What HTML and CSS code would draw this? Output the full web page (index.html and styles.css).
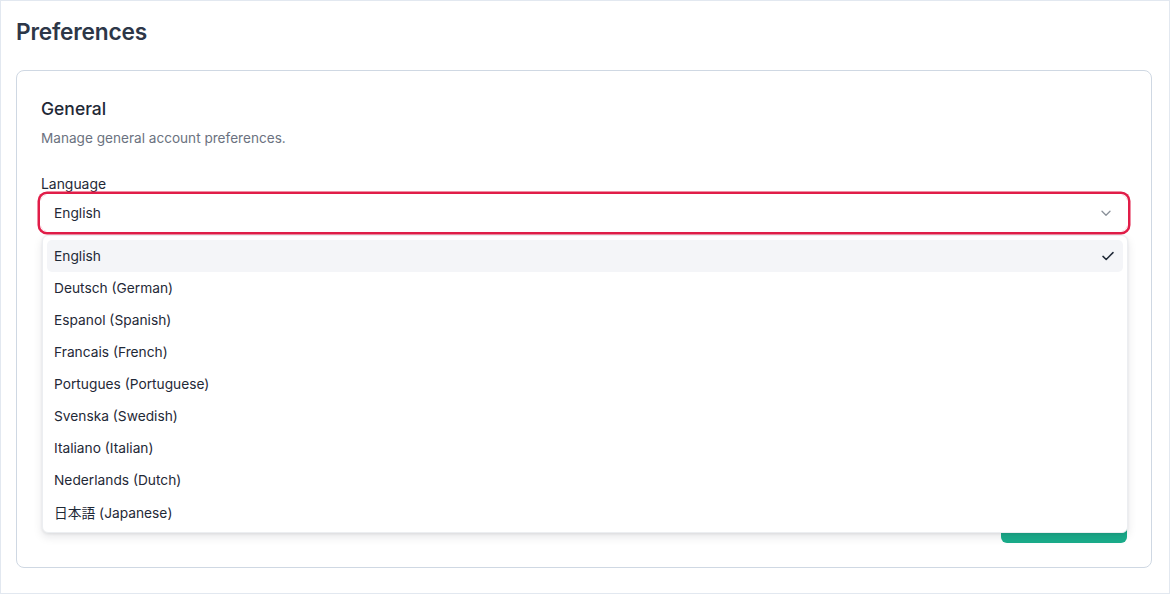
FILE: index.html
```html
<!DOCTYPE html>
<html lang="en">
<head>
<meta charset="utf-8">
<title>Preferences</title>
<link rel="stylesheet" href="styles.css">
</head>
<body>
<div class="page">
  <h1 class="page-title">Preferences</h1>
  <section class="card">
    <h2 class="card-title">General</h2>
    <p class="card-desc">Manage general account preferences.</p>
    <div class="field">
      <label class="field-label">Language</label>
      <div class="select-wrap">
        <div class="select">
          <span class="select-value">English</span>
          <svg class="chevron" width="12" height="12" viewBox="0 0 12 12" fill="none"><path d="M2 4.2l4 4 4-4" stroke="#8a9099" stroke-width="1.3" stroke-linecap="round" stroke-linejoin="round"/></svg>
        </div>
        <ul class="menu">
          <li class="option active"><span>English</span>
            <svg class="check" width="14" height="14" viewBox="0 0 14 14" fill="none"><path d="M2 7.4l3.2 3.1L12 3.6" stroke="#1f2937" stroke-width="1.5" stroke-linecap="round" stroke-linejoin="round"/></svg>
          </li>
          <li class="option">Deutsch (German)</li>
          <li class="option">Espanol (Spanish)</li>
          <li class="option">Francais (French)</li>
          <li class="option">Portugues (Portuguese)</li>
          <li class="option">Svenska (Swedish)</li>
          <li class="option">Italiano (Italian)</li>
          <li class="option">Nederlands (Dutch)</li>
          <li class="option">日本語 (Japanese)</li>
        </ul>
      </div>
    </div>
    <div class="card-footer">
      <button class="btn-save">Save changes</button>
    </div>
  </section>
</div>
</body>
</html>
```

FILE: styles.css
```css
* { box-sizing: border-box; }
html, body { margin: 0; padding: 0; background: #fff; }
body {
  font-family: Inter, "Noto Sans", "Noto Sans CJK JP", sans-serif;
  color: #1f2937;
}
.page {
  width: 1170px;
  height: 594px;
  border: 1px solid #e2e8f0;
  padding: 15px 17px 0 15px;
  overflow: hidden;
}
.page-title {
  margin: 0;
  font-size: 22.7px;
  line-height: 32px;
  font-weight: 600;
  color: #2d3748;
  letter-spacing: -0.2px;
}
.card {
  margin-top: 22px;
  border: 1px solid #cfd8e3;
  border-radius: 8px;
  padding: 25px 24px 24px 24px;
  height: 498px;
}
.card-title {
  margin: 0;
  font-size: 17.5px;
  line-height: 26px;
  font-weight: 500;
  color: #1f2937;
}
.card-desc {
  margin: 6px 0 0;
  font-size: 13.6px;
  line-height: 20px;
  color: #6b7280;
}
.field { margin-top: 27px; }
.field-label {
  display: block;
  font-size: 13.9px;
  line-height: 18px;
  color: #1f2937;
  margin-bottom: 2px;
}
.select-wrap { position: relative; }
.select {
  height: 36px;
  border: 1px solid #fff;
  border-radius: 6px;
  box-shadow: 0 0 0 1px #fff, 0 0 0 3.5px #e11d48;
  display: flex;
  align-items: center;
  justify-content: space-between;
  padding: 0 14px 0 12px;
  font-size: 13.75px;
  color: #1f2937;
}
.chevron { display: block; }
.menu {
  position: absolute;
  top: 40px;
  left: 1px;
  right: -1px;
  margin: 0;
  padding: 4px;
  list-style: none;
  background: #fff;
  border: 1px solid #eceef1;
  border-radius: 6px;
  box-shadow: 0 4px 10px rgba(15, 23, 42, 0.10), 0 1px 3px rgba(15, 23, 42, 0.08);
  z-index: 10;
}
.option {
  height: 32px;
  display: flex;
  align-items: center;
  justify-content: space-between;
  padding: 0 8px 0 7px;
  font-size: 13.75px;
  color: #1f2937;
  border-radius: 5px;
}
.option.active { background: #f4f5f8; }
.check { display: block; }
.card-footer {
  margin-top: 274px;
  display: flex;
  justify-content: flex-end;
}
.btn-save {
  width: 126px;
  height: 38px;
  border: none;
  border-radius: 6px;
  background: #1aad8b;
  color: #fff;
  font-family: inherit;
  font-size: 14px;
  font-weight: 500;
}
```
